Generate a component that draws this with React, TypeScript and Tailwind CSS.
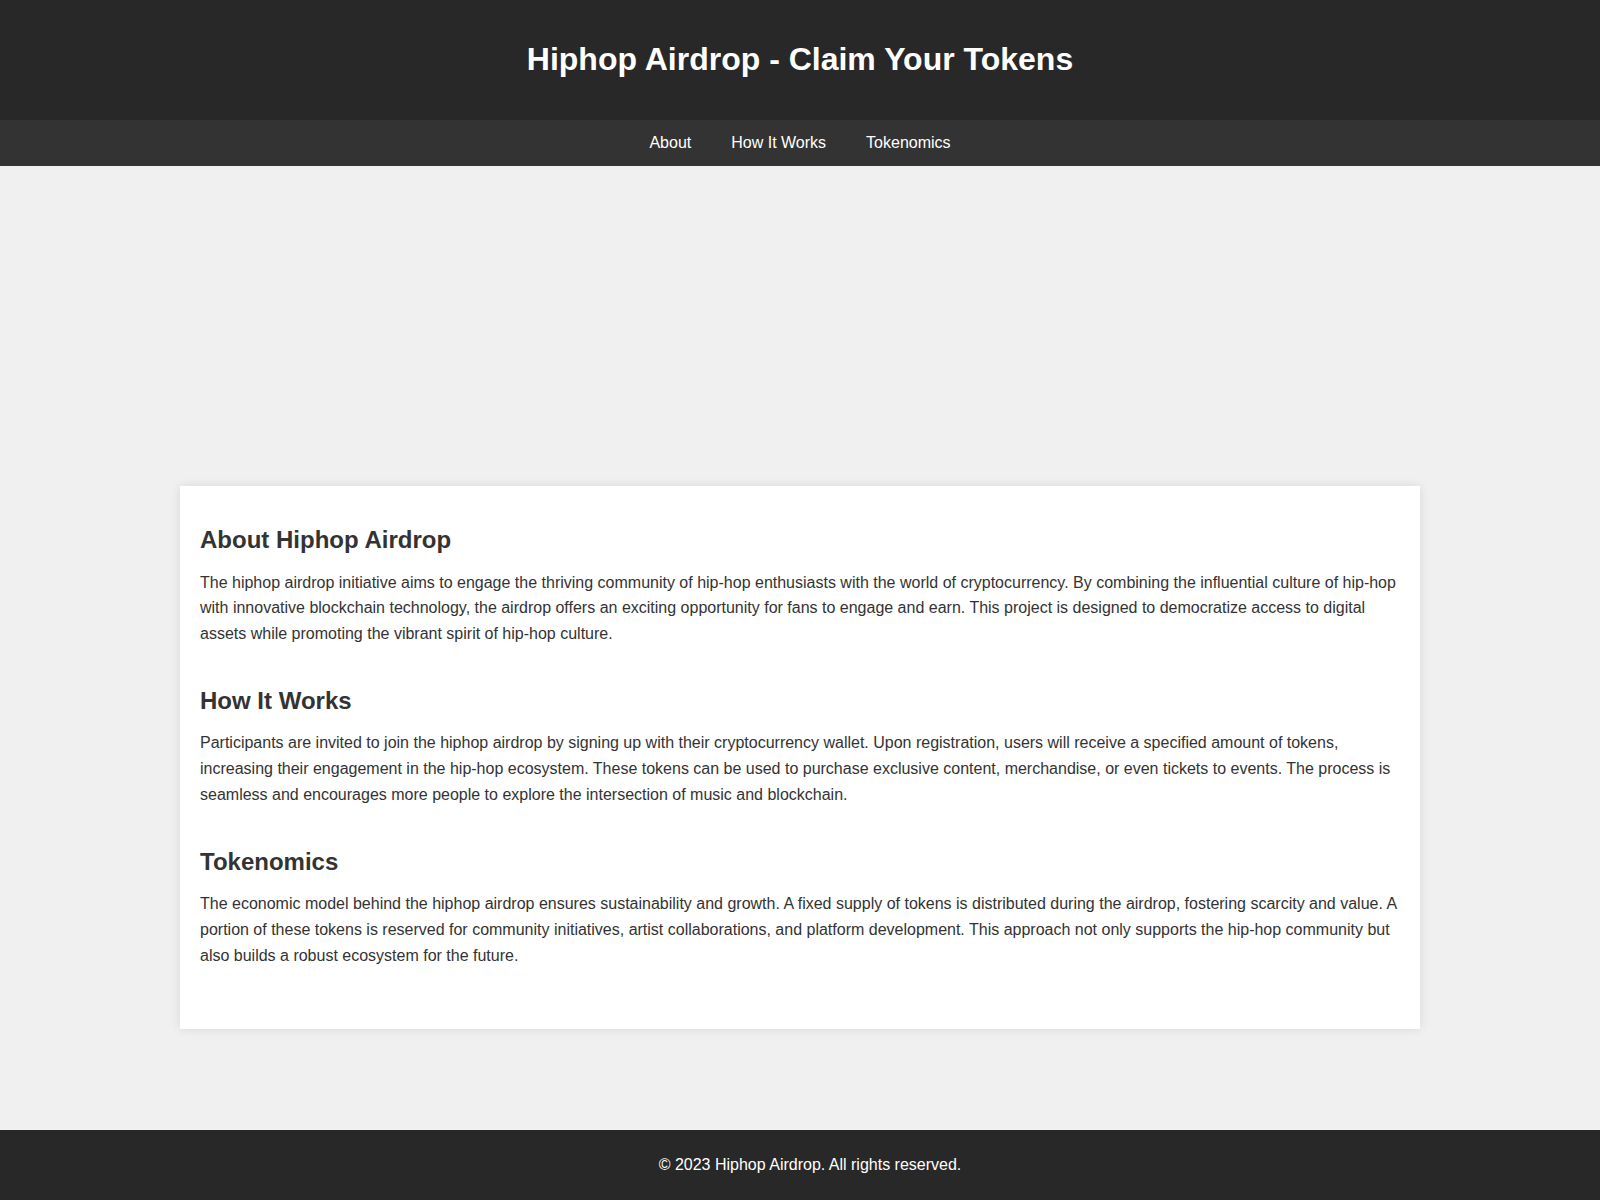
import React from "react";

const sections = [
  {
    title: "About Hiphop Airdrop",
    text: "The hiphop airdrop initiative aims to engage the thriving community of hip-hop enthusiasts with the world of cryptocurrency. By combining the influential culture of hip-hop with innovative blockchain technology, the airdrop offers an exciting opportunity for fans to engage and earn. This project is designed to democratize access to digital assets while promoting the vibrant spirit of hip-hop culture.",
  },
  {
    title: "How It Works",
    text: "Participants are invited to join the hiphop airdrop by signing up with their cryptocurrency wallet. Upon registration, users will receive a specified amount of tokens, increasing their engagement in the hip-hop ecosystem. These tokens can be used to purchase exclusive content, merchandise, or even tickets to events. The process is seamless and encourages more people to explore the intersection of music and blockchain.",
  },
  {
    title: "Tokenomics",
    text: "The economic model behind the hiphop airdrop ensures sustainability and growth. A fixed supply of tokens is distributed during the airdrop, fostering scarcity and value. A portion of these tokens is reserved for community initiatives, artist collaborations, and platform development. This approach not only supports the hip-hop community but also builds a robust ecosystem for the future.",
  },
];

export default function App() {
  return (
    <div
      className="min-h-screen flex flex-col bg-[#f0f0f0] text-[#333333] leading-[1.6]"
      style={{ fontFamily: '"Liberation Sans", Arial, sans-serif' }}
    >
      <header className="bg-[#282828] h-[120px] pb-[2px] flex items-center justify-center">
        <h1 className="text-white text-[32px] font-bold leading-[37px]">
          Hiphop Airdrop - Claim Your Tokens
        </h1>
      </header>
      <nav className="bg-[#333333] h-[46px] pt-[10px] flex justify-center">
        <a href="#about" className="text-white text-[16px] leading-[25.6px] mx-5">About</a>
        <a href="#how" className="text-white text-[16px] leading-[25.6px] mx-5">How It Works</a>
        <a href="#tokenomics" className="text-white text-[16px] leading-[25.6px] mx-5">Tokenomics</a>
      </nav>
      <main className="flex-1 flex flex-col items-center">
        <div className="mt-[320px] w-[1240px] bg-white px-5 pt-5 pb-10 shadow-[0_0_10px_rgba(0,0,0,0.1)] flex flex-col">
          {sections.map((s) => (
            <section key={s.title} className="flex flex-col mt-5 mb-[20.5px]">
              <h2 className="text-[24px] font-bold leading-[27.6px] mb-4">{s.title}</h2>
              <p className="text-[16px] leading-[25.6px]">{s.text}</p>
            </section>
          ))}
        </div>
      </main>
      <footer className="bg-[#282828] h-[70px] pt-[22px] pl-5 text-center text-white text-[16px] leading-[25.6px]">
        © 2023 Hiphop Airdrop. All rights reserved.
      </footer>
    </div>
  );
}
